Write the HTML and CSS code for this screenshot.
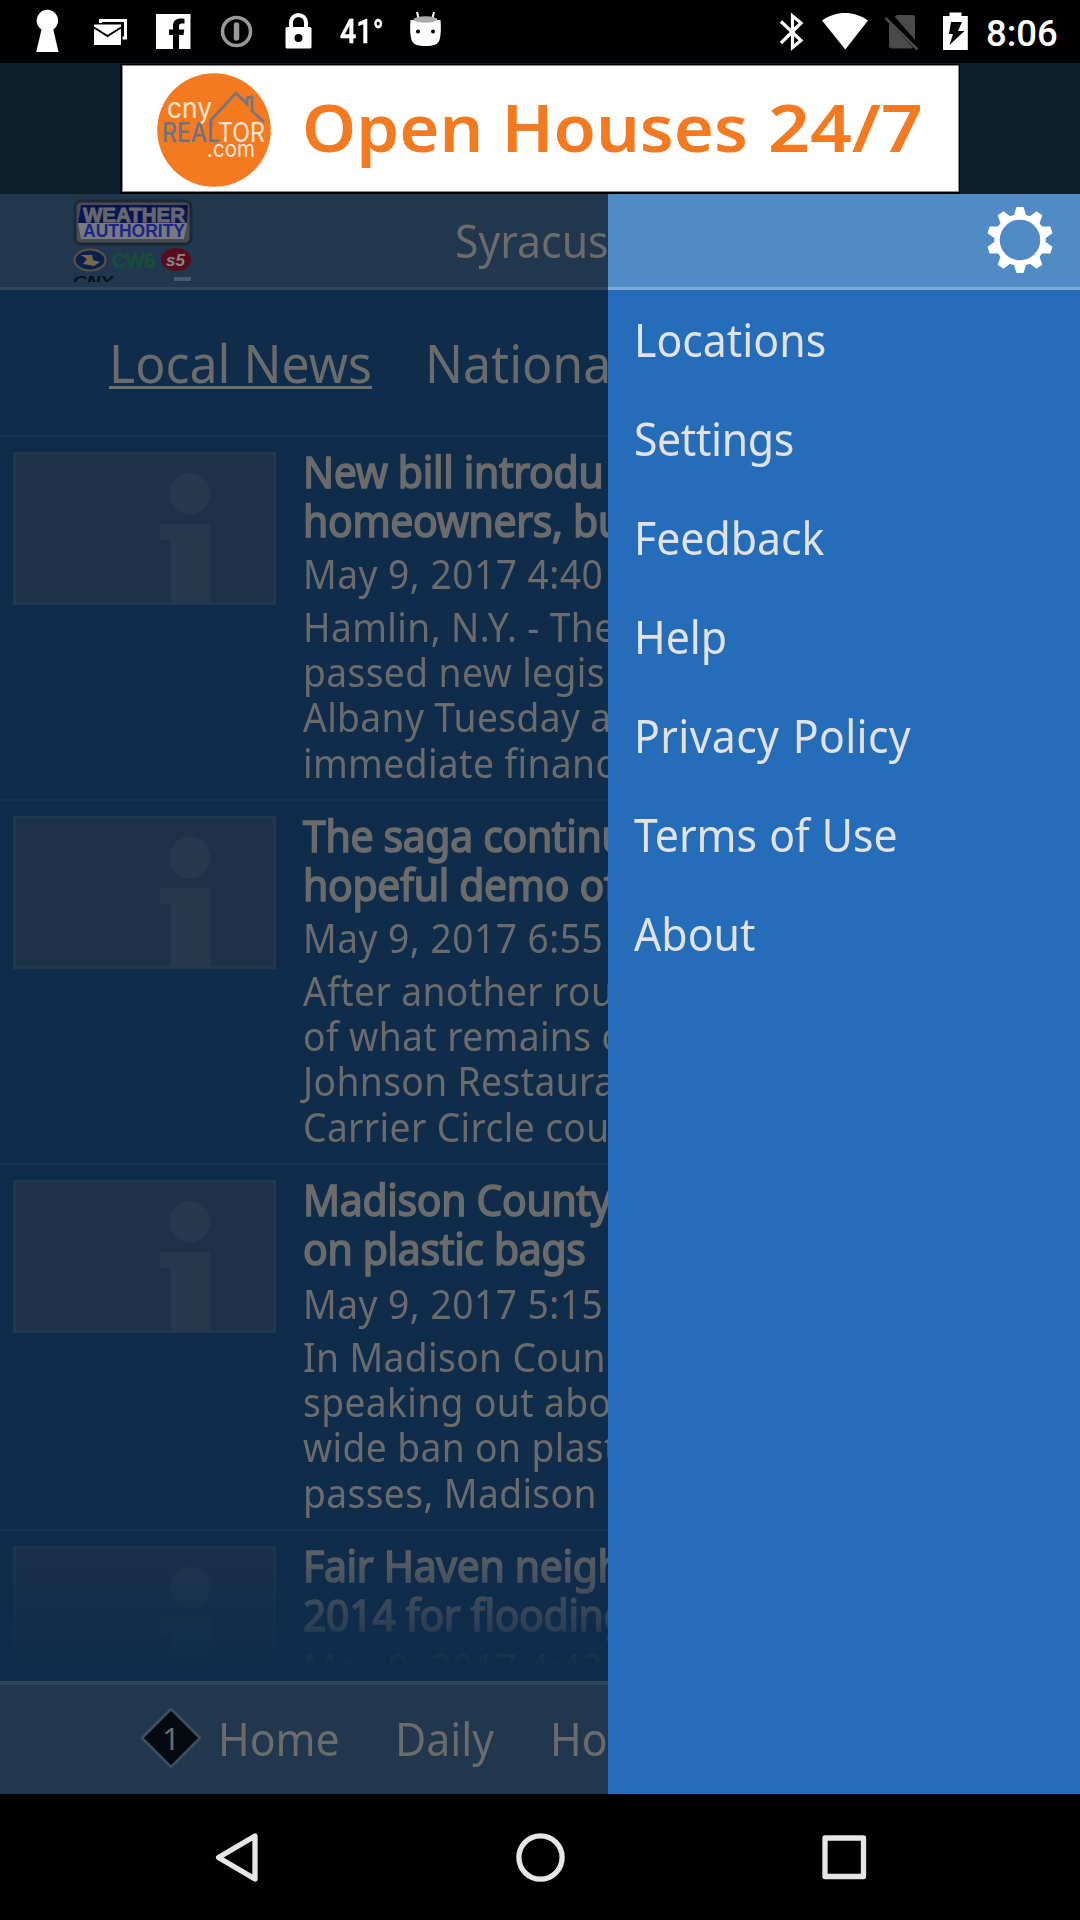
FILE: index.html
```html
<!DOCTYPE html>
<html lang="en">
<head>
<meta charset="utf-8">
<title>Weather Authority</title>
<link rel="stylesheet" href="styles.css">
</head>
<body>
<div class="screen">
  <header class="status">
    <div class="status-left">
      <svg width="312" height="63" viewBox="0 0 312 63">
        <path fill="#fff" d="M41.5 29.5a10.7 10.7 0 1 1 11.8 0L58.5 52H36.200z"/>
        <path fill="none" stroke="#fff" stroke-width="3" d="M100.500 23v-2.500h25V38h-3"/>
        <path fill="#fff" d="M94 24.500h27V45H94z"/>
        <path fill="none" stroke="#000" stroke-width="2" d="M94 27.500l13.500 8.500L121 27.500"/>
        <path fill="#fff" d="M156 14h34.500v35H179V35h4.500l.8-5.500H179v-3.200c0-1.800.6-2.800 3-2.800h2.500v-4.800c-7-1-11.500 1-11.500 7v3.800h-4V35h4v14h-17z"/>
        <circle cx="236.500" cy="31.500" r="14" fill="none" stroke="#999" stroke-width="3.500"/>
        <path stroke="#999" stroke-width="5.500" stroke-linecap="round" d="M236.500 25v13"/>
        <path fill="none" stroke="#fff" stroke-width="4" d="M291 28v-5.500a7.500 7.500 0 0 1 15 0V28"/>
        <rect x="285.500" y="27" width="26" height="21.500" rx="1.500" fill="#fff"/>
        <circle cx="298.500" cy="38" r="4" fill="#000"/>
      </svg>
      <span class="temp"><span>41°</span></span>
      <svg width="34" height="63" viewBox="0 0 34 63">
        <path stroke="#fff" stroke-width="2" d="M9 12l2 8M26 12l-2 8"/>
        <path fill="#fff" d="M2.500 20h30c.7 8 .4 15-1 20-1.500 4.500-6 6-14 6s-12.500-1.500-14-6c-1.400-5-1.700-12-1-20z"/>
        <ellipse cx="17.500" cy="19.500" rx="12" ry="3.200" fill="#aaa"/>
        <circle cx="10" cy="31.500" r="2" fill="#000"/><circle cx="25" cy="31.500" r="2" fill="#000"/>
      </svg>
    </div>
    <div class="status-right">
      <svg width="192" height="63" viewBox="778 0 192 63">
        <path fill="none" stroke="#fff" stroke-width="3.200" d="M781 21.500l20 19-8.500 7V16l8.500 7-20 20"/>
        <path fill="#fff" d="M822 20.500c13.500-10 32.500-10 46 0L845.300 49.500z"/>
        <path fill="#4b4b4b" d="M894.500 16.500 897.500 15h14.500q3 0 3 3v22zM889 22.500l24 25q-1 1-3 1h-18q-3 0-3-3z"/>
        <path stroke="#4b4b4b" stroke-width="2.500" d="M885.500 18l32 31.500"/>
        <path fill="#fff" d="M943 16h6.500v-3.500h12V16h6.300v34H943z"/>
        <path fill="#000" d="M951 22h11l-4 9h6.500L949.500 45l3.500-11h-4z"/>
      </svg>
      <span class="clock">8:06</span>
    </div>
  </header>

  <div class="ad">
    <svg class="banner" width="840" height="130" viewBox="0 0 840 130">
      <rect width="840" height="130" fill="#000"/>
      <rect x="2.500" y="1.500" width="836" height="126" fill="#fff" stroke="#8a8a8a"/>
      <circle cx="94" cy="66" r="56.800" fill="#f47a22"/>
      <path fill="none" stroke="#75777a" stroke-width="2.800" d="M91 63v-7l25-27 11 11v-6l5-1v14l12 11"/>
      <g font-family="Inter, sans-serif">
        <text x="47" y="54" font-size="28" fill="#fbe6d5" textLength="45" lengthAdjust="spacingAndGlyphs">cny</text>
        <text x="42" y="77.500" font-size="27" font-weight="500" fill="#6b7480" textLength="58" lengthAdjust="spacingAndGlyphs">REAL</text>
        <text x="98" y="77.500" font-size="27" fill="#fbe6d5" textLength="47" lengthAdjust="spacingAndGlyphs">TOR</text>
        <text x="87" y="92.500" font-size="23" fill="#fbe6d5" textLength="48" lengthAdjust="spacingAndGlyphs">.com</text>
      </g>
      <g font-family="Noto Sans, sans-serif" font-size="65" font-weight="600" fill="#f47a22">
        <text x="182" y="88" textLength="446" lengthAdjust="spacingAndGlyphs">Open Houses</text>
        <text x="648" y="88" textLength="155" lengthAdjust="spacingAndGlyphs">24/7</text>
      </g>
    </svg>
  </div>

  <div class="content">
    <main class="app">
      <div class="appbar">
        <svg class="station" width="120" height="84" viewBox="0 0 120 84">
          <rect x="2" y="2" width="116" height="43" rx="6" fill="#484c52" stroke="#1e2833" stroke-width="3"/>
          <path fill="#0a1450" d="M8 6h107l-1 18H5z"/>
          <path fill="#777a80" d="M5 24h109l-3 16H8z"/>
          <g font-family="Liberation Sans, sans-serif" font-weight="700">
            <text x="10" y="22.500" font-size="21" fill="#66686d" stroke="#66686d" textLength="102" lengthAdjust="spacingAndGlyphs">WEATHER</text>
            <text x="10" y="38" font-size="18" fill="#1c2684" textLength="102" lengthAdjust="spacingAndGlyphs">AUTHORITY</text>
            <text x="39" y="67.500" font-size="18" font-weight="400" fill="#155036" stroke="#155036" textLength="43" lengthAdjust="spacingAndGlyphs">CW6</text>
          </g>
          <ellipse cx="17" cy="61" rx="15.500" ry="10.500" fill="#08224d" stroke="#5d5040" stroke-width="2"/>
          <path fill="#77694e" d="M8 56h11l1 5 7 2-6 4-11-2 4-5z"/>
          <ellipse cx="103" cy="60.500" rx="15" ry="11.500" fill="#5b0c1b"/>
          <text x="93" y="67" font-family="Liberation Sans, sans-serif" font-size="17" font-weight="700" font-style="italic" fill="#858585">s5</text>
          <svg x="0" y="76" width="119" height="7" viewBox="0 0 119 7">
            <text x="0" y="11" font-family="Liberation Sans, sans-serif" font-size="15" font-weight="700" font-style="italic" fill="#07111f" textLength="40" lengthAdjust="spacingAndGlyphs">CNY</text>
            <rect x="101" y="2" width="17" height="4" fill="#455a6e"/>
          </svg>
        </svg>
        <span class="place">Syracuse</span>
      </div>
      <nav class="tabs">
        <span class="tab active"><span>Local News</span></span>
        <span class="tab"><span>National</span></span>
      </nav>
      <div class="list">
        <article class="item">
          <svg class="thumb" viewBox="0 0 263 153"><use href="#info"/></svg>
          <div class="text">
            <h2>New bill introdu<br>homeowners, bu</h2>
            <p class="date">May 9, 2017 4:40</p>
            <p class="body">Hamlin, N.Y. - The<br>passed new legisl<br>Albany Tuesday a<br>immediate financ</p>
          </div>
        </article>
        <article class="item">
          <svg class="thumb" viewBox="0 0 263 153"><use href="#info"/></svg>
          <div class="text">
            <h2>The saga continu<br>hopeful demo of</h2>
            <p class="date">May 9, 2017 6:55</p>
            <p class="body">After another rou<br>of what remains o<br>Johnson Restaura<br>Carrier Circle cou</p>
          </div>
        </article>
        <article class="item tall">
          <svg class="thumb" viewBox="0 0 263 153"><use href="#info"/></svg>
          <div class="text">
            <h2>Madison County<br>on plastic bags</h2>
            <p class="date">May 9, 2017 5:15</p>
            <p class="body">In Madison Coun<br>speaking out abo<br>wide ban on plast<br>passes, Madison</p>
          </div>
        </article>
        <article class="item">
          <svg class="thumb" viewBox="0 0 263 153"><use href="#info"/></svg>
          <div class="text">
            <h2>Fair Haven neigh<br>2014 for flooding</h2>
            <p class="date">May 9, 2017 4:42</p>
          </div>
        </article>
      </div>
      <nav class="bottom">
        <svg class="alert" width="62" height="62" viewBox="0 0 62 62">
          <path fill="#040a10" stroke="#3f4f5f" stroke-width="2.500" stroke-linejoin="round" d="M31 2l29 29-29 29L2 31z"/>
          <text x="31" y="43" text-anchor="middle" font-family="Noto Sans, sans-serif" font-size="31" fill="#6b6b6b">1</text>
        </svg>
        <span class="link home">Home</span>
        <span class="link daily">Daily</span>
        <span class="link">Hourly</span>
      </nav>
    </main>
    <aside class="drawer">
      <div class="drawer-head">
        <svg width="68" height="68" viewBox="-34 -34 68 68">
          <circle r="23" fill="none" stroke="#fff" stroke-width="5.500"/>
          <g fill="#fff">
            <path id="tooth" d="M-6.500-23.500-3.500-33h7L6.500-23.500z"/>
            <use href="#tooth" transform="rotate(36)"/><use href="#tooth" transform="rotate(72)"/>
            <use href="#tooth" transform="rotate(108)"/><use href="#tooth" transform="rotate(144)"/>
            <use href="#tooth" transform="rotate(180)"/><use href="#tooth" transform="rotate(216)"/>
            <use href="#tooth" transform="rotate(252)"/><use href="#tooth" transform="rotate(288)"/>
            <use href="#tooth" transform="rotate(324)"/>
          </g>
        </svg>
      </div>
      <ul class="menu">
        <li><span>Locations</span></li>
        <li><span class="tight">Settings</span></li>
        <li><span>Feedback</span></li>
        <li><span>Help</span></li>
        <li><span class="loose">Privacy Policy</span></li>
        <li><span>Terms of Use</span></li>
        <li><span>About</span></li>
      </ul>
    </aside>
  </div>

  <footer class="navbar">
    <svg width="1080" height="126" viewBox="0 1794 1080 126" fill="none" stroke="#e6e6e6" stroke-width="5.300" stroke-linejoin="round">
      <path d="M218.500 1857.500 255 1836v43z"/>
      <circle cx="540.500" cy="1857.500" r="21.600"/>
      <rect x="825" y="1838" width="38.500" height="38.500"/>
    </svg>
  </footer>
</div>
<svg width="0" height="0" class="defs">
  <symbol id="info" viewBox="0 0 263 153">
    <rect x="1.500" y="1.500" width="260" height="150" fill="#1d3149" stroke="#22384d" stroke-width="3"/>
    <ellipse cx="177" cy="41.500" rx="20.500" ry="21" fill="#24394d"/>
    <path fill="#24394d" d="M147 72h50v80h-39V88h-11z"/>
  </symbol>
</svg>
</body>
</html>
```
FILE: styles.css
```css
* { box-sizing: border-box; margin: 0; padding: 0; }
body { background: #000; width: 1080px; height: 1920px; overflow: hidden; font-family: "Noto Sans", sans-serif; }
svg { display: block; flex: none; }
.defs { height: 0; }
.screen { width: 1080px; height: 1920px; display: grid; grid-template-rows: 63px 131px 1600px 126px; }

.status { background: #000; color: #fff; display: flex; justify-content: space-between; font-family: Roboto, sans-serif; font-weight: 500; overflow: hidden; }
.status-left, .status-right { display: flex; }
.temp { width: 96px; padding-left: 28px; font-size: 33px; line-height: 63px; }
.temp span { display: inline-block; transform: scaleX(.87); transform-origin: left; -webkit-text-stroke: .5px #fff; }
.status-right { width: 302px; }
.clock { padding-left: 16px; font-size: 36.500px; line-height: 67px; }

.ad { background: #0c1f2c; display: flex; justify-content: center; padding-top: 1px; }

.content { display: grid; grid-template-columns: 608px 472px; }
.app { background: #0f2c4a; color: #6b6b6b; display: grid; grid-template-rows: 96px 145px 1246px 113px; white-space: nowrap; overflow: hidden; }
.appbar { background: #20374e; border-bottom: 3px solid #2f455a; display: flex; padding-left: 73px; overflow: hidden; }
.station { margin-top: 5px; }
.place { margin-left: 262px; font-size: 46px; line-height: 92px; transform: scaleX(.93); transform-origin: left; }

.tabs { display: flex; padding: 37px 0 0 109px; gap: 53px; }
.tab { height: 62px; font-size: 53.5px; line-height: 71px; width: 263px; flex: none; }
.tab span { display: inline-block; transform: scaleX(.935); transform-origin: left; }
.tab.active { border-bottom: 3px solid #6d6f68; }

.list { overflow: hidden; -webkit-mask-image: linear-gradient(#000 1090px, transparent 1237px); mask-image: linear-gradient(#000 1090px, transparent 1237px); }
.item { height: 364px; border-top: 2px solid #16344f; display: flex; padding-left: 13px; gap: 27px; }
.item.tall { height: 366px; }
.thumb { width: 263px; height: 153px; margin-top: 15px; }
.text { padding-top: 10px; transform: scaleX(.93); transform-origin: left; }
h2 { font-size: 44px; line-height: 49px; font-weight: 400; -webkit-text-stroke: 1.700px currentColor; letter-spacing: -.35px; }
.date { font-size: 40px; line-height: 46px; margin-top: 6px; letter-spacing: .5px; }
.tall .date { margin-top: 8px; }
.body { font-size: 40px; line-height: 45.200px; margin-top: 7px; letter-spacing: .4px; }

.bottom { background: #20374e; border-top: 4px solid #2f455a; display: flex; padding-left: 140px; font-size: 46px; }
.alert { margin-top: 22px; }
.link { line-height: 107px; transform: scaleX(.93); transform-origin: left; margin-left: 16px; }
.home { width: 161px; }
.daily { width: 139px; }

.drawer { background: #256db9; color: #e2e2e2; display: grid; grid-template-rows: 96px 1fr; }
.drawer-head { background: #508bc6; border-bottom: 3px solid #7fabdc; display: flex; justify-content: flex-end; padding: 12px 26px 0 0; }
.menu { list-style: none; padding: 0 0 0 26px; font-size: 46px; }
.menu li { height: 99px; line-height: 98px; }
.menu span { display: inline-block; transform: scaleX(.93); transform-origin: left; word-spacing: 1px; }
.menu .tight { letter-spacing: -.4px; }
.menu .loose { letter-spacing: .4px; word-spacing: 2px; }

.navbar { background: #000; }
```
